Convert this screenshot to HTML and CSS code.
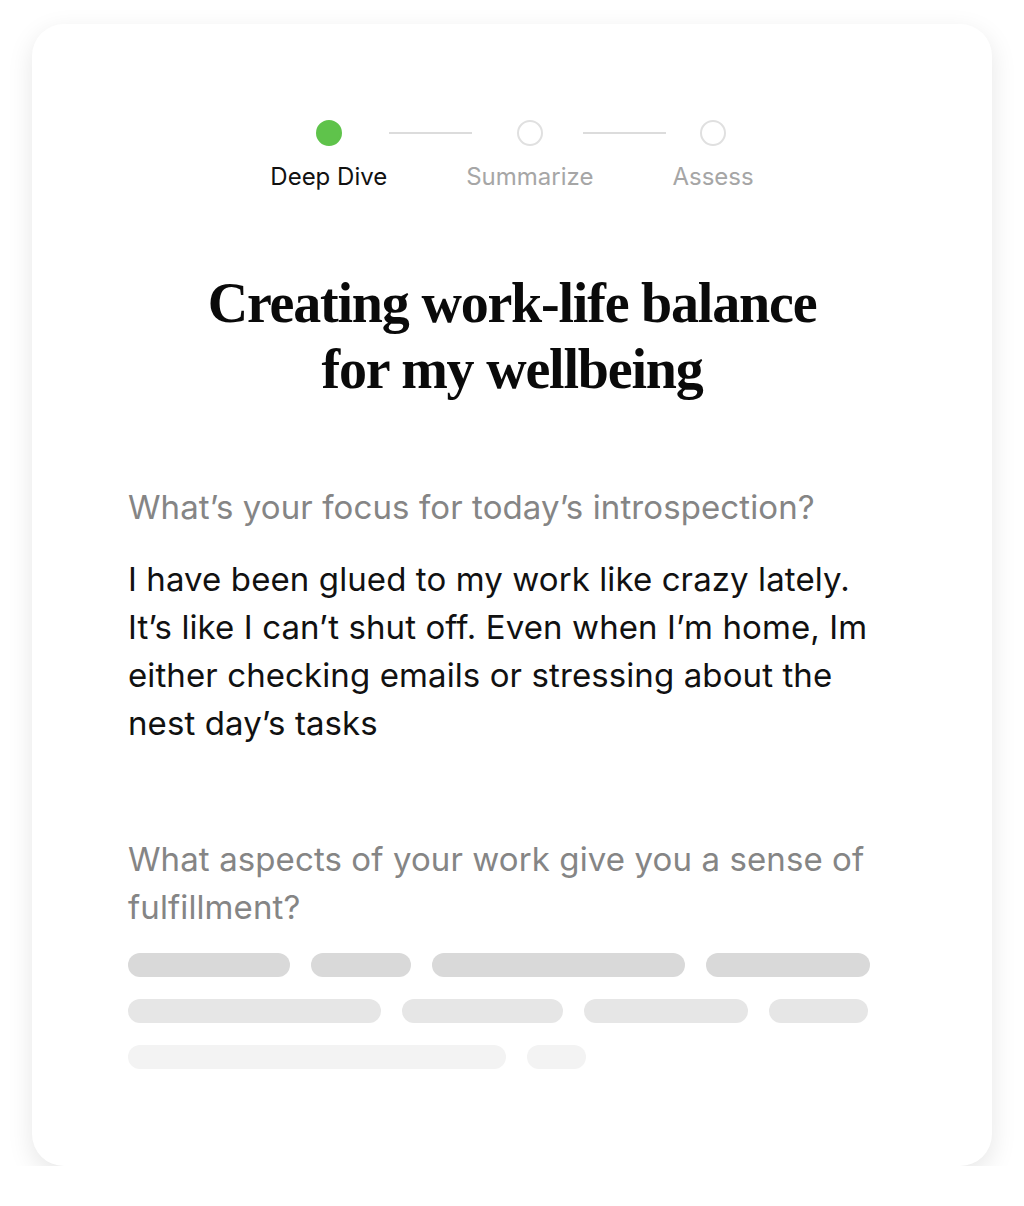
FILE: index.html
```html
<!DOCTYPE html>
<html lang="en">
<head>
  <meta charset="UTF-8">
  <title>Deep Dive: Creating work-life balance</title>
  <link rel="stylesheet" href="styles.css">
</head>
<body>
  <div class="card">
    <div class="stepper">
      <div class="step active">
        <span class="dot"></span>
        <span class="label">Deep Dive</span>
      </div>
      <span class="line first"></span>
      <div class="step">
        <span class="dot"></span>
        <span class="label">Summarize</span>
      </div>
      <span class="line second"></span>
      <div class="step">
        <span class="dot"></span>
        <span class="label">Assess</span>
      </div>
    </div>

    <h1 class="title">Creating work-life balance<br>for my wellbeing</h1>

    <div class="qa">
      <p class="question">What’s your focus for today’s introspection?</p>
      <p class="answer">I have been glued to my work like crazy lately.<br>It’s like I can’t shut off. Even when I’m home, Im<br>either checking emails or stressing about the<br>nest day’s tasks</p>
    </div>

    <div class="qa">
      <p class="question">What aspects of your work give you a sense of<br>fulfillment?</p>
      <div class="skeleton">
        <div class="row r1">
          <span style="width:162px"></span>
          <span style="width:100px"></span>
          <span style="width:253px"></span>
          <span style="width:164px"></span>
        </div>
        <div class="row r2">
          <span style="width:253px"></span>
          <span style="width:161px"></span>
          <span style="width:164px"></span>
          <span style="width:99px"></span>
        </div>
        <div class="row r3">
          <span style="width:378px"></span>
          <span style="width:59px"></span>
        </div>
      </div>
    </div>
  </div>
</body>
</html>
```

FILE: styles.css
```css
body {
  margin: 0;
  background: #fff;
  font-family: Inter, "Noto Sans", sans-serif;
}
.card {
  box-sizing: border-box;
  width: 960px;
  height: 1142px;
  margin: 24px 0 0 32px;
  padding: 96px 96px 0;
  background: #fff;
  border-radius: 32px;
  box-shadow: 0 8px 26px rgba(0, 0, 0, 0.1);
}
.stepper {
  display: flex;
  justify-content: center;
  align-items: flex-start;
}
.step {
  display: flex;
  flex-direction: column;
  align-items: center;
}
.dot {
  box-sizing: border-box;
  width: 26px;
  height: 26px;
  border-radius: 50%;
  border: 2px solid #e0e0e0;
}
.step.active .dot {
  background: #5fc34b;
  border-color: #5fc34b;
}
.label {
  margin-top: 16px;
  font-size: 24px;
  line-height: 30px;
  color: #a6a6a6;
  white-space: nowrap;
}
.step.active .label {
  color: #111;
}
.line {
  flex: none;
  width: 83px;
  height: 2px;
  margin-top: 12px;
  background: #dcdcdc;
}
.line.first {
  margin-left: 2px;
  margin-right: -6px;
}
.line.second {
  margin-left: -10px;
  margin-right: 6px;
}
.title {
  margin: 78px 0 0;
  text-align: center;
  font-family: "Liberation Serif", serif;
  font-weight: bold;
  font-size: 56px;
  line-height: 66px;
  letter-spacing: -1.2px;
  color: #0a0a0a;
}
.qa {
  margin-top: 81px;
}
.qa + .qa {
  margin-top: 88px;
}
.question,
.answer {
  margin: 0;
  font-size: 33px;
  line-height: 48px;
  letter-spacing: 0.1px;
}
.question {
  color: #858585;
}
.answer {
  margin-top: 24px;
  color: #111;
}
.skeleton {
  margin-top: 22px;
}
.row {
  display: flex;
  gap: 21px;
  margin-bottom: 22px;
}
.row span {
  height: 24px;
  border-radius: 12px;
}
.r1 span { background: #d9d9d9; }
.r2 span { background: #e6e6e6; }
.r3 span { background: #f3f3f3; }
```
